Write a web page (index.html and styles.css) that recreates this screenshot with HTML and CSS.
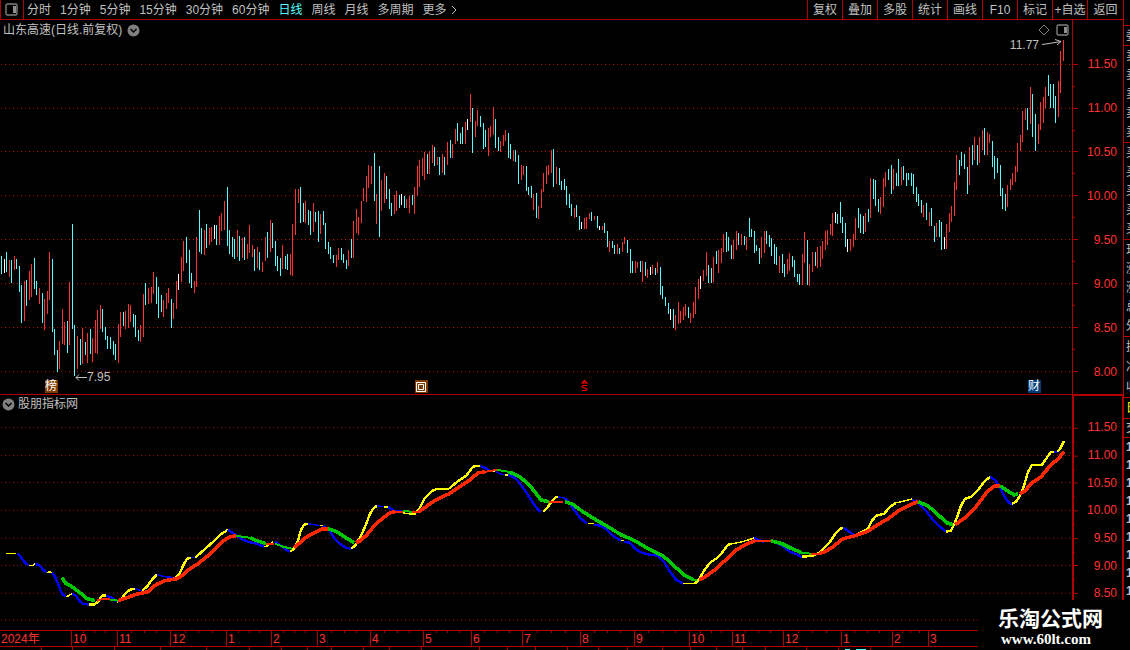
FILE: index.html
```html
<!DOCTYPE html>
<html lang="zh-CN">
<head>
<meta charset="utf-8">
<title>山东高速 日线</title>
<link rel="stylesheet" href="styles.css">
</head>
<body>
<div class="app">
  <main class="main">
    <header class="toolbar">
      <button class="layout-btn" aria-label="布局">
        <svg width="14" height="13" viewBox="0 0 14 13"><rect x="1" y="1" width="11" height="11" rx="1.5" fill="none" stroke="#808080" stroke-width="1.4"/><rect x="8" y="3" width="3" height="7" fill="#909090"/></svg>
      </button>
      <nav class="periods">
        <button>分时</button><button>1分钟</button><button>5分钟</button><button>15分钟</button><button>30分钟</button><button>60分钟</button><button class="active">日线</button><button>周线</button><button>月线</button><button>多周期</button><button class="more">更多<svg width="6" height="10" viewBox="0 0 6 10"><path d="M1 1L5 5L1 9" fill="none" stroke="#c0c0c0"/></svg></button>
      </nav>
      <div class="tools">
        <button>复权</button><button>叠加</button><button>多股</button><button>统计</button><button>画线</button><button>F10</button><button>标记</button><button>+自选</button><button>返回</button>
      </div>
    </header>

    <section class="panel kline">
      <div class="plot">
        <svg class="chart" viewBox="0 20 1072 374" preserveAspectRatio="none" shape-rendering="crispEdges">
          <path class="grid" d="M1 64.5H1072M1 108.5H1072M1 151.5H1072M1 195.5H1072M1 239.5H1072M1 283.5H1072M1 327.5H1072M1 371.5H1072"/>
          <path id="up" fill="#ff3232"/>
          <path id="down" fill="#54ffff"/>
          <path id="flat" fill="#fff"/>
        </svg>
        <h1 class="title">山东高速(日线.前复权)
          <svg width="13" height="13" viewBox="0 0 13 13"><circle cx="6.5" cy="6.5" r="6" fill="#808080"/><path d="M3.5 5L6.5 8L9.5 5" fill="none" stroke="#000" stroke-width="1.5"/></svg>
        </h1>
        <div class="corner">
          <svg width="12" height="12" viewBox="0 0 12 12"><path d="M6 1L11 6L6 11L1 6Z" fill="none" stroke="#808080"/></svg>
          <svg width="13" height="12" viewBox="0 0 13 12"><rect x="1" y="1" width="11" height="10" rx="1.5" fill="none" stroke="#808080" stroke-width="1.4"/><rect x="8" y="3" width="3" height="6" fill="#909090"/></svg>
        </div>
        <div class="note high">11.77<svg width="22" height="14" viewBox="0 0 22 14"><path d="M1 6.500L8 5.500L20 3.500M14 1.500L20 3.500L16 7" fill="none" stroke="#c0c0c0"/></svg></div>
        <div class="note low"><svg width="12" height="9" viewBox="0 0 12 9"><path d="M12 4.500H1M4 1.500L1 4.500L4 7.500" fill="none" stroke="#c0c0c0"/></svg>7.95</div>
        <span class="mark mark-list">榜</span>
        <span class="mark mark-buyback"><svg width="13" height="13" viewBox="0 0 13 13"><path d="M1.500 2.500h9v9h-9zM3.500 4.500h5v5h-5z" fill="none" stroke="#fff"/></svg></span>
        <span class="mark mark-div"><svg width="7" height="12" viewBox="0 0 7 12"><path d="M3.500 0.500L6 3H1ZM6 5.500H2L1 6.500L2 7.500L5 8.500L6 9.500L5 10.500H1" fill="none" stroke="#f00" stroke-width="1.2"/></svg></span>
        <span class="mark mark-fin">财</span>
      </div>
      <div class="axis">
        <svg class="ticks" viewBox="0 20 5 374" preserveAspectRatio="none" shape-rendering="crispEdges"><path d="M0 64.5h5M0 108.5h5M0 151.5h5M0 195.5h5M0 239.5h5M0 283.5h5M0 327.5h5M0 371.5h5M0 86.5h2M0 130.5h2M0 173.5h2M0 217.5h2M0 261.5h2M0 305.5h2M0 349.5h2"/></svg>
        <div class="labels"><span>11.50</span><span>11.00</span><span>10.50</span><span>10.00</span><span>9.50</span><span>9.00</span><span>8.50</span><span>8.00</span></div>
      </div>
    </section>

    <section class="panel indicator">
      <div class="plot">
        <svg class="chart" viewBox="0 395 1072 235" preserveAspectRatio="none" shape-rendering="crispEdges">
          <path class="grid" d="M1 427.5H1072M1 455.5H1072M1 482.5H1072M1 510.5H1072M1 538.5H1072M1 565.5H1072M1 593.5H1072M1 620.5H1072"/>
          <g id="lines" fill="none" stroke-linejoin="round"></g>
        </svg>
        <h2 class="title"><svg width="13" height="13" viewBox="0 0 13 13"><circle cx="6.5" cy="6.5" r="6" fill="#808080"/><path d="M3.5 5L6.5 8L9.500 5" fill="none" stroke="#000" stroke-width="1.5"/></svg>股朋指标网</h2>
      </div>
      <div class="axis">
        <svg class="ticks" viewBox="0 395 5 235" preserveAspectRatio="none" shape-rendering="crispEdges"><path d="M0 427.5h4M0 455.5h4M0 482.5h4M0 510.5h4M0 538.5h4M0 565.5h4M0 593.5h4M0 441.5h1M0 469.5h1M0 496.5h1M0 524.5h1M0 552.5h1M0 579.5h1"/></svg>
        <div class="labels"><span>11.50</span><span>11.00</span><span>10.50</span><span>10.00</span><span>9.50</span><span>9.00</span><span>8.50</span></div>
      </div>
    </section>
  </main>

  <aside class="side">
    <div class="quote q-ratio"><span>委</span></div>
    <div class="quote q-five"><span>卖</span><span>卖</span><span>卖</span><span>卖</span><span>卖</span></div>
    <div class="quote q-five"><span>买</span><span>买</span><span>买</span><span>买</span><span>买</span></div>
    <div class="quote q-five"><span>现</span><span>涨</span><span>涨</span><span>总</span><span>外</span></div>
    <div class="quote q-three"><span>换</span><span>净</span><span>收</span></div>
    <div class="quote q-tab"><span>日</span></div>
    <div class="quote q-head"><span>交</span></div>
    <div class="quote q-deals"><span>1</span><span>1</span><span>1</span><span>1</span><span>1</span><span>1</span><span>1</span><span>1</span><span>1</span></div>
  </aside>

  <div class="dates"><span>2024年</span><span>10</span><span>11</span><span>12</span><span>1</span><span>2</span><span>3</span><span>4</span><span>5</span><span>6</span><span>7</span><span>8</span><span>9</span><span>10</span><span>11</span><span>12</span><span>1</span><span>2</span><span>3</span></div>
  <div class="tabs"><i></i><i></i><i></i><i></i><i></i><i></i><i></i><i></i><i></i><i></i><i></i><i></i><i></i><i></i><i></i><i></i><i></i><i></i><i></i><i></i><i></i><i></i><i></i><i></i><i></i><i class="tab-active"></i><i></i></div>

  <div class="brand"><strong>乐淘公式网</strong><span>www.60lt.com</span></div>
</div>
<script src="chart.js"></script>
</body>
</html>
```
FILE: styles.css
```css
* { box-sizing: border-box; }
body {
  margin: 0;
  background: #000;
  color: #c0c0c0;
  font: 12px/14px "Liberation Sans", "Noto Sans CJK SC", sans-serif;
}
button {
  margin: 0;
  padding: 0;
  border: 0;
  background: none;
  color: inherit;
  font: inherit;
  white-space: nowrap;
}
svg { display: block; flex: none; }

.app {
  position: relative;
  height: 100vh;
  display: grid;
  grid-template: 1fr 17px 3px / 1fr 6px;
  overflow: hidden;
}
.main { display: flex; flex-direction: column; min-width: 0; min-height: 0; }

.toolbar {
  display: flex;
  flex: none;
  height: 20px;
  border: solid #b00000;
  border-width: 0 1px 1px;
}
.layout-btn { width: 23px; padding-left: 4px; border-right: 1px solid #b00000; }
.periods { display: flex; gap: 9px; padding-left: 3px; }
.active { color: #54ffff; }
.more { display: flex; align-items: center; gap: 4px; }
.tools { display: flex; margin-left: auto; }
.tools button { width: 35px; border-left: 1px solid #b00000; }
.tools button:last-child { width: 36px; }

.panel { display: flex; min-height: 0; }
.kline { flex: 375 1 0; border-bottom: 1px solid #b00000; }
.indicator { flex: 235 1 0; }
.plot { position: relative; flex: 1; min-width: 0; }
.chart { position: absolute; width: 100%; height: 100%; }
.grid { fill: none; stroke: #b01010; stroke-dasharray: 1 3; }
.title {
  position: relative;
  display: flex;
  align-items: center;
  gap: 5px;
  margin: 0;
  padding: 3px;
  font-size: 12px;
  font-weight: normal;
  line-height: 14px;
}
.indicator .title { padding: 2px; gap: 3px; }
.corner {
  position: absolute;
  top: 4px;
  right: 3px;
  display: flex;
  gap: 6px;
}
.note { position: absolute; display: flex; align-items: center; }
.high { top: 18px; right: 9px; gap: 2px; }
.low { left: 7%; top: 350px; }
.mark {
  position: absolute;
  bottom: 1px;
  width: 13px;
  height: 13px;
  color: #fff;
  line-height: 13px;
  font-size: 12px;
}
.mark-list { left: 45px; background: #803c00; }
.mark-buyback { left: 415px; background: #803c00; }
.mark-div { left: 581px; }
.mark-fin { left: 1028px; background: #003c78; }

.axis {
  display: flex;
  width: 52px;
  border: solid #b00000;
  border-width: 0 1px;
}
.indicator .axis { border-width: 1px 2px 0; }
.ticks { width: 5px; height: 100%; stroke: #b00000; fill: none; }
.labels {
  display: flex;
  flex: 1;
  flex-direction: column;
  padding: 22px 6px 0 0;
  color: #ff3232;
  text-align: right;
}
.indicator .labels { padding: 17px 5px 23px 0; }
.labels span { display: flex; flex: 1; align-items: center; justify-content: flex-end; }

.side {
  display: flex;
  flex-direction: column;
  min-height: 0;
  padding-top: 25px;
  overflow: hidden;
}
.quote {
  display: flex;
  flex: none;
  flex-direction: column;
  justify-content: space-around;
  padding-left: 2px;
  border-top: 1px solid #b00000;
  line-height: 14px;
}
.q-ratio { height: 20px; }
.q-five { height: 97px; }
.q-three { height: 61px; }
.q-tab { height: 21px; color: #ffff00; }
.q-head { height: 19px; }
.q-deals { height: 163px; font-weight: bold; }

.dates {
  grid-column: 1 / 3;
  display: grid;
  grid-template-columns: 71fr 46fr 53fr 56fr 45fr 46fr 53fr 53fr 48fr 51fr 58fr 54fr 55fr 43fr 51fr 58fr 51fr 36fr 202fr;
  border: solid #b00000;
  border-width: 1px 0;
  color: #ff3232;
}
.dates span {
  min-width: 0;
  padding: 1px 0 0 1px;
  border-left: 1px solid #b00000;
  background:
    linear-gradient(#b00000, #b00000) 25% 0 / 1px 2px no-repeat,
    linear-gradient(#b00000, #b00000) 50% 0 / 1px 2px no-repeat,
    linear-gradient(#b00000, #b00000) 75% 0 / 1px 2px no-repeat;
}
.dates span:first-child { border: 0; background: none; }
.tabs {
  grid-column: 1 / 3;
  display: grid;
  grid-template-columns: 42fr 31fr 42fr 46fr 46fr 43fr 32fr 26fr 24fr 32fr 26fr 32fr 58fr 28fr 28fr 32fr 31fr 29fr 35fr 28fr 26fr 26fr 23fr 41fr 32fr 32fr 259fr;
}
.tabs i { border-right: 1px solid #b00000; }
.tab-active {
  background:
    linear-gradient(#54ffff, #54ffff) 6px 2px / 5px 1px no-repeat,
    linear-gradient(#54ffff, #54ffff) 17px 2px / 10px 1px no-repeat;
}

.brand {
  position: absolute;
  right: 0;
  bottom: 0;
  width: 152px;
  height: 50px;
  padding: 8px 0 0 20px;
  background: #000;
  color: #fff;
}
.brand strong { display: block; font-size: 21px; line-height: 22px; }
.brand span {
  display: block;
  padding-left: 3px;
  font: bold 15px/18px "Liberation Serif", serif;
}
```
FILE: chart.js
```js
// Each bar is "x top bottom"; grouped by close direction.
const bars = {
  up: `9 260 277,14 256 270,24 281 321,29 271 300,31 264 297,39 288 304,44 299 330,47 291 314,49 252 300,59 341 369,62 309 344,64 322 345,69 282 345,77 336 369,82 328 364,87 333 363,92 338 362,95 320 353,97 310 354,100 305 329,118 324 363,120 312 337,125 311 329,128 304 328,130 305 322,140 325 342,143 294 337,148 288 304,151 287 303,153 272 294,163 300 317,166 293 309,168 288 303,173 303 319,176 281 309,181 257 282,183 241 271,194 281 293,196 237 287,204 230 255,209 228 245,211 227 242,219 216 245,221 213 231,224 201 230,237 230 257,242 238 258,247 244 259,249 225 253,252 245 257,257 247 268,262 262 272,265 237 261,270 220 252,282 245 269,290 254 275,292 224 276,295 189 235,298 189 203,305 201 223,313 203 232,320 214 234,336 255 267,338 248 260,348 250 266,353 221 258,356 209 233,358 217 235,361 201 223,363 188 201,366 176 202,368 165 188,371 166 184,376 194 224,381 180 211,384 173 203,394 195 214,396 191 211,406 199 208,409 196 213,414 187 214,417 166 196,419 160 187,422 158 176,424 152 180,429 151 174,432 145 163,437 157 165,442 154 173,447 142 165,452 144 158,455 129 144,465 122 144,470 94 122,475 121 137,477 110 126,488 128 156,490 126 137,493 107 135,500 141 152,503 135 146,505 130 141,513 150 161,521 165 180,523 166 175,533 194 210,538 206 219,541 189 208,543 173 192,546 166 184,548 165 175,551 150 173,556 167 184,574 208 218,584 218 229,586 217 229,589 213 219,594 216 220,602 226 230,609 241 252,617 244 254,622 242 252,624 237 244,635 261 273,637 262 268,642 261 282,647 269 278,652 265 274,657 262 273,675 315 330,678 302 324,680 311 323,683 307 320,685 304 316,690 313 323,693 302 318,695 287 314,698 279 299,703 270 281,706 252 276,713 257 282,718 250 273,721 248 263,723 234 252,733 240 259,736 231 250,741 234 245,746 237 250,761 237 258,764 231 253,779 256 273,787 259 274,789 253 271,802 254 285,804 232 263,809 264 286,812 252 272,817 247 268,820 246 267,822 241 259,825 231 250,827 230 245,830 224 235,832 213 236,850 239 251,853 234 247,855 218 240,865 213 232,870 178 218,880 197 214,883 178 207,885 172 187,893 169 190,901 167 185,923 205 217,929 212 226,936 223 237,946 224 249,949 213 232,951 206 222,954 182 216,956 155 190,969 147 185,974 137 160,979 137 163,982 130 150,987 132 155,989 134 143,1007 185 207,1010 179 190,1012 173 185,1015 166 182,1017 143 172,1020 135 151,1022 111 142,1025 109 120,1030 87 124,1038 124 144,1040 102 130,1043 97 123,1045 87 108,1058 81 117,1060 51 93,1063 40 61`,
  down: `1 256 274,6 252 272,11 260 283,16 259 269,19 266 292,21 285 323,26 280 306,34 258 289,36 281 295,42 293 323,52 259 332,54 329 355,57 350 372,67 321 353,72 224 329,74 325 376,80 339 365,85 342 355,90 329 354,102 309 332,105 327 340,107 336 349,110 337 349,113 341 355,115 344 360,123 312 326,133 314 327,135 315 337,138 330 341,145 283 305,156 277 304,158 287 318,161 295 312,171 299 328,186 237 263,189 250 283,191 273 288,199 210 252,201 228 254,206 224 248,216 225 245,227 187 246,229 230 254,232 237 257,234 239 259,239 236 261,244 237 260,254 249 271,259 252 270,267 232 258,272 223 248,275 241 266,277 256 271,280 258 276,285 256 269,287 254 270,300 187 223,303 203 222,308 210 225,310 211 235,315 212 222,318 211 242,323 211 225,325 223 249,328 242 254,330 247 259,333 255 263,341 248 260,343 254 263,346 260 269,351 239 258,374 153 201,379 166 237,386 176 199,389 189 209,391 203 216,399 195 208,404 196 208,412 195 205,427 154 174,434 147 166,439 157 175,444 157 175,450 140 158,457 123 141,460 133 144,462 127 144,472 108 153,480 116 127,483 123 149,485 130 147,495 119 148,498 137 151,508 133 158,510 144 159,515 150 162,518 155 184,526 166 191,528 187 195,531 186 198,536 193 218,553 149 187,559 168 185,561 181 190,564 179 190,566 186 205,569 194 208,571 204 216,576 205 217,579 216 230,591 212 221,597 216 228,604 223 233,607 231 247,612 241 248,614 245 254,619 248 254,627 240 253,630 249 273,632 261 273,640 261 272,645 262 276,655 268 275,660 267 295,662 286 299,665 297 306,668 303 314,673 309 328,688 307 318,708 265 283,711 268 283,716 251 264,726 232 252,728 237 251,731 245 259,738 233 245,744 236 245,749 218 237,751 229 237,754 231 253,756 245 251,759 248 264,766 231 244,769 235 247,771 238 256,774 244 264,776 247 265,782 254 273,784 264 277,792 256 267,794 260 277,797 274 282,799 274 285,807 240 285,815 252 266,837 214 224,840 202 223,842 217 233,845 223 247,858 208 228,860 214 233,863 216 234,868 209 222,873 179 199,875 180 206,878 199 212,888 169 180,891 165 194,896 173 186,898 159 186,903 166 180,906 173 186,908 173 180,911 173 186,913 174 194,916 187 202,918 194 206,921 200 213,926 203 220,931 208 226,934 226 242,939 220 237,941 222 250,959 160 175,961 152 166,964 154 169,967 167 194,972 145 165,977 145 165,984 128 155,992 141 167,994 156 179,997 158 173,1000 165 196,1002 188 209,1005 194 211,1027 108 130,1032 94 137,1035 114 151,1048 75 96,1050 84 108,1053 84 108,1055 96 123`,
  flat: `4 259 273,178 274 290,214 225 239,401 194 205,467 119 130,581 222 229,599 226 230,650 267 275,670 309 320,700 276 289,835 212 223,847 239 252,944 237 249`
};
for (const [id, data] of Object.entries(bars)) {
  document.getElementById(id).setAttribute('d', data.split(',').map(b => {
    const [x, top, bottom] = b.split(' ');
    return `M${x} ${top}h1V${bottom}h-1z`;
  }).join(''));
}

// Line segments: colour key, then points. Capital keys are the thick parts.
const colours = { y: '#ffff00', b: '#0000ff', g: '#00c800', r: '#ff2800' };
const lines = `
y 6,553.5 16,553.5
B 17,554 19,555 22,559 26,564 29,566
y 29,566 32,566 35,564
B 35,564 40,566 44,571 47,573
y 47,573 50,572 52,573
B 52,573 55,577 58,584 61,592 63,595 66,597
y 66,597 69,596 72,594
B 72,594 76,596 79,601 83,604 89,605
Y 89,605 94,605 98,602 102,596 106,596
B 106,596 112,598 117,602
Y 117,602 121,600 125,594 130,590 135,589
b 135,589 138,590 142,591
Y 142,591 147,587 152,580 157,575
b 157,575 165,577 176,578
Y 176,578 180,573 184,564 187,559 191,558
b 191,558 195,558
Y 195,558 203,551 212,543 220,535 228,530
B 228,530 234,534 241,539 248,542 257,544 264,547
y 264,547 268,546 273,542
B 275,542 281,546 286,550 290,552
Y 290,552 294,549 298,541 301,530 304,525 308,524
b 308,524 315,525 320,526
y 320,526 323,526
B 323,526 329,530 334,538 340,544 346,548 351,549
Y 351,549 355,546 360,538 365,527 370,514 373,509 377,506
b 377,506 384,507
y 384,507 388,507
B 388,507 394,511 403,512
y 403,513 409,514 416,514
Y 416,513 420,508 425,498 432,491 437,489
y 437,489 449,489
Y 449,489 457,482 466,476 472,468 475,466 480,466
B 480,466 485,468 490,471
y 490,471 495,471
b 495,471 500,474 505,475
y 505,475 508,475
B 508,475 513,477 517,480 524,489 531,500 538,510 541,512
Y 543,512 548,507 552,501 556,497 558,497
b 558,497 564,498
B 564,498 569,502 574,510 581,519 587,524
y 588,524 594,524
B 594,525 601,526 607,530 613,536 621,541
y 621,541 624,541
B 624,542 630,543 635,549 642,553 650,555 658,556 664,562 670,572 676,580 683,584
y 683,584 695,584
Y 695,584 699,580 704,571 710,563 716,559 722,553 728,545 732,544
y 732,544 742,542 749,540 754,538
B 754,538 758,540 764,542
y 764,542 773,542
B 774,542 782,546 790,552 798,555 802,558
Y 802,557 813,556 819,553 825,547 830,542 836,533 840,529 843,528
B 843,528 848,531 855,536
Y 855,536 862,532 868,529 872,521 876,516 884,514 890,507 896,503
y 896,503 905,501 912,499
B 912,500 918,503 925,510 933,520 940,527 946,532
Y 946,532 951,531 954,525 958,515 961,506 965,499 971,497 978,490 985,481 990,477
B 990,477 995,480 1000,487 1004,496 1008,502 1012,505
Y 1012,504 1016,502 1020,496 1024,486 1028,472 1032,465 1042,465 1046,459 1051,452 1054,452
b 1054,452 1057,452
Y 1057,452 1060,449 1064,441
G 62,578 66,584 72,587 80,593 87,599 95,601
r 97,601 104,599 110,599
g 110,600 118,601
R 118,601 127,598 135,595 148,592 156,585 165,581 177,579 183,575 190,569 198,564 208,556 217,547 226,539 231,537 236,536
g 236,536 250,538
G 250,538 257,541 266,544
r 266,544 274,544
g 275,544 283,547 292,549
R 294,548 301,542 308,536 316,532 322,529 328,529
G 328,529 337,532 346,538 354,543
R 356,543 360,541 367,535 375,525 382,519 390,513 395,512
r 395,512 403,512
g 403,511 412,512
r 412,512 419,512
R 419,512 430,504 438,499 449,494 458,488 470,480 478,473 485,472
r 485,472 497,470
g 497,470 509,472
G 509,472 520,477 530,486 541,500 549,502
r 549,502 563,502
G 565,502 572,504 583,512 596,520 608,527 621,535 633,540 650,550 663,556 675,567 685,576 693,580
g 693,580 697,580
R 699,580 704,578 715,570 726,560 735,551 747,544 755,541
r 755,541 771,541
G 771,541 782,544 792,549 802,553
g 802,553 811,554
r 811,554 819,554
R 819,554 825,552 833,547 843,539 855,536 867,532 876,526 888,519 900,510 912,504 918,502
G 918,502 928,506 938,515 947,523 953,525
R 955,525 965,518 976,507 988,491 995,486 1000,486
G 1000,486 1006,490 1014,495 1018,494
R 1020,494 1025,491 1032,483 1041,477 1050,466 1058,459 1064,452`;
const thick = { y: 2.4, b: 2.4, g: 3.6, r: 3.6 };
const thin = { y: 1.4, b: 1.4, g: 2, r: 2 };
document.getElementById('lines').innerHTML = lines.trim().split('\n').map(row => {
  const key = row[0], k = key.toLowerCase();
  const width = key === k ? thin[k] : thick[k];
  return `<polyline points="${row.slice(2)}" stroke="${colours[k]}" stroke-width="${width}"/>`;
}).join('');
```
